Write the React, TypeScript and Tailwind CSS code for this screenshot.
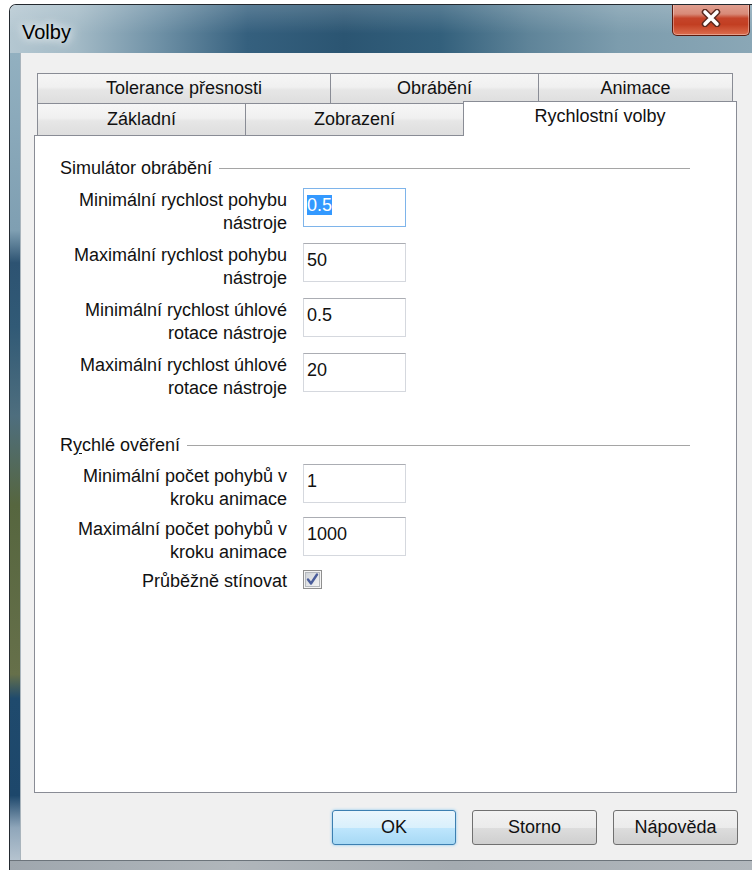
import type { ReactNode } from "react";

type Row = {
  lines: string[];
  value: string;
  focused?: boolean;
};

const SIM_ROWS: Row[] = [
  { lines: ["Minimální rychlost pohybu", "nástroje"], value: "0.5", focused: true },
  { lines: ["Maximální rychlost pohybu", "nástroje"], value: "50" },
  { lines: ["Minimální rychlost úhlové", "rotace nástroje"], value: "0.5" },
  { lines: ["Maximální rychlost úhlové", "rotace nástroje"], value: "20" },
];

const CHECK_ROWS: Row[] = [
  { lines: ["Minimální počet pohybů v", "kroku animace"], value: "1" },
  { lines: ["Maximální počet pohybů v", "kroku animace"], value: "1000" },
];

function Tab({
  label,
  className,
  last = false,
}: {
  label: string;
  className: string;
  last?: boolean;
}) {
  return (
    <div
      className={`flex items-center justify-center border-t border-l border-[#898c95] bg-[linear-gradient(180deg,#f6f6f6_0%,#f0f0f0_45%,#e6e6e6_55%,#dedede_100%)] text-[18px] leading-[23px] ${
        last ? "border-r" : ""
      } ${className}`}
    >
      {label}
    </div>
  );
}

function GroupHeading({ children }: { children: ReactNode }) {
  return (
    <div className="flex h-[23px] items-center text-[18px] leading-[23px]">
      <span>{children}</span>
      <div className="mr-[46px] ml-[7px] h-0 flex-1 border-t border-[#a5a5a5]" />
    </div>
  );
}

function FieldRow({ row }: { row: Row }) {
  return (
    <div className="flex items-start">
      <div className="w-[227px] pt-[1px] text-right text-[18px] leading-[23px]">
        {row.lines.map((l) => (
          <div key={l}>{l}</div>
        ))}
      </div>
      <div
        className={`ml-[16px] h-[39px] w-[103px] border bg-white pt-[5px] pl-[3px] text-[18px] leading-[22px] ${
          row.focused
            ? "border-[#7eb4ea]"
            : "border-[#d5d8de] border-t-[#abadb3]"
        }`}
      >
        {row.focused ? (
          <span className="bg-[#3399ff] text-white">{row.value}</span>
        ) : (
          row.value
        )}
      </div>
    </div>
  );
}

function Checkbox() {
  return (
    <svg width="19" height="19" viewBox="0 0 19 19" className="ml-[16px]">
      <defs>
        <linearGradient id="cb" x1="0" y1="0" x2="1" y2="1">
          <stop offset="0" stopColor="#cfd3d8" />
          <stop offset="1" stopColor="#f4f4f4" />
        </linearGradient>
      </defs>
      <rect x="0.5" y="0.5" width="18" height="18" fill="#f4f4f4" stroke="#8f8f8f" />
      <rect x="2.5" y="2.5" width="14" height="14" fill="url(#cb)" stroke="#b4b8bd" />
      <path
        d="M5 9.5 L8 13.5 L14 4.5"
        fill="none"
        stroke="#4a5d9b"
        strokeWidth="2.4"
        strokeLinecap="round"
        strokeLinejoin="round"
      />
    </svg>
  );
}

function DialogButton({
  label,
  primary = false,
  className,
}: {
  label: string;
  primary?: boolean;
  className: string;
}) {
  return (
    <button
      className={`flex h-[35px] items-center justify-center rounded-[3px] border text-[18px] leading-[23px] ${
        primary
          ? "border-[#3c7fb1] bg-[linear-gradient(180deg,#eaf6fd_0%,#d9f0fc_50%,#bee6fd_51%,#a7d9f5_100%)] shadow-[0_0_3px_#7fc4ef]"
          : "border-[#707070] bg-[linear-gradient(180deg,#f2f2f2_0%,#ebebeb_50%,#dddddd_51%,#cfcfcf_100%)]"
      } ${className}`}
    >
      {label}
    </button>
  );
}

function CloseButton() {
  return (
    <div className="-mt-[5px] mr-[2px] ml-auto flex h-[36px] w-[78px] items-center justify-center rounded-b-[5px] border border-t-0 border-[#5a1a0e] bg-[linear-gradient(180deg,#e5aa9c_0%,#d88a78_40%,#c5442a_52%,#c23e22_70%,#dc6e4f_100%)] shadow-[inset_0_0_0_1px_rgba(255,255,255,0.35)]">
      <svg width="24" height="18" viewBox="0 0 24 18">
        <path d="M6 3 L18 15 M18 3 L6 15" stroke="#5b2a20" strokeWidth="6.5" strokeLinecap="round" />
        <path d="M6 3 L18 15 M18 3 L6 15" stroke="#ffffff" strokeWidth="3.6" strokeLinecap="round" />
      </svg>
    </div>
  );
}

export default function App() {
  return (
    <div className="relative h-[870px] w-[752px] overflow-hidden bg-white font-['Liberation_Sans',Arial,sans-serif] text-[#111]">
      <div className="mt-[4px] ml-[9px] flex h-[866px] w-[743px] flex-col overflow-hidden rounded-tl-[7px] border-t border-l border-[#23292f]">
        {/* title bar */}
        <div className="flex h-[48px] items-start bg-[linear-gradient(180deg,rgba(255,255,255,0.18)_0%,rgba(255,255,255,0)_60%),linear-gradient(90deg,#b4c7d1_0%,#a3bac6_9%,#6f91a6_20%,#35607e_32%,#2b5572_45%,#33607c_58%,#5f8499_70%,#7c9cad_82%,#8aa7b6_100%)]">
          <span className="mt-[15px] ml-[12px] text-[20px] leading-[24px] text-black [text-shadow:0_0_8px_#ffffff,0_0_14px_#ffffff]">
            Volby
          </span>
          <CloseButton />
        </div>

        <div className="flex flex-1">
          {/* left glass edge */}
          <div className="w-[11px] border-r border-[#a9b4bc] bg-[linear-gradient(180deg,#92b0c0_0%,#7f9fb2_22%,#2d5372_26%,#315a76_34%,#4e6e7e_45%,#56663f_56%,#66704a_77%,#1f4a6d_80%,#1d476b_92%,#8fa6ba_96%,#b5c3cf_100%)]" />

          {/* client area */}
          <div className="flex-1 bg-[#f0f0f0] pt-[20px] pl-[13px]">
            <div className="w-[704px]">
              <div className="ml-[3px] flex h-[30px]">
                <Tab label="Tolerance přesnosti" className="w-[293px]" />
                <Tab label="Obrábění" className="w-[208px]" />
                <Tab label="Animace" className="w-[195px]" last />
              </div>
              <div className="ml-[3px] flex h-[32px] items-end">
                <Tab label="Základní" className="h-[32px] w-[208px]" />
                <Tab label="Zobrazení" className="h-[32px] w-[218px]" />
                <div className="relative z-10 -mb-[1px] flex h-[35px] w-[274px] justify-center border-x border-t border-[#898c95] bg-white pt-[3px] text-[18px] leading-[23px]">
                  Rychlostní volby
                </div>
              </div>

              <div className="h-[658px] w-[703px] border border-[#898c95] bg-white pl-[25px]">
                <div className="mt-[21px]">
                  <GroupHeading>Simulátor obrábění</GroupHeading>
                </div>
                <div className="mt-[8px] flex flex-col gap-[8px]">
                  {SIM_ROWS.map((r) => (
                    <FieldRow key={r.lines.join(" ")} row={r} />
                  ))}
                </div>

                <div className="mt-[34px]">
                  <GroupHeading>
                    R<span className="underline underline-offset-2">y</span>chlé ověření
                  </GroupHeading>
                </div>
                <div className="mt-[7px] flex flex-col gap-[6px]">
                  {CHECK_ROWS.map((r) => (
                    <FieldRow key={r.lines.join(" ")} row={r} />
                  ))}
                  <div className="flex items-start">
                    <div className="w-[227px] text-right text-[18px] leading-[23px]">
                      Průběžně stínovat
                    </div>
                    <Checkbox />
                  </div>
                </div>
              </div>

              <div className="mt-[17px] flex justify-end gap-[16px]">
                <DialogButton label="OK" primary className="w-[124px]" />
                <DialogButton label="Storno" className="w-[125px]" />
                <DialogButton label="Nápověda" className="w-[125px]" />
              </div>
            </div>
          </div>
        </div>

        {/* bottom glass edge */}
        <div className="h-[10px] border-t border-[#6c747b] bg-[linear-gradient(90deg,#9fa7ae_0%,#b0b6bb_30%,#a4abb1_60%,#b2b8bd_100%)]" />
      </div>
    </div>
  );
}
